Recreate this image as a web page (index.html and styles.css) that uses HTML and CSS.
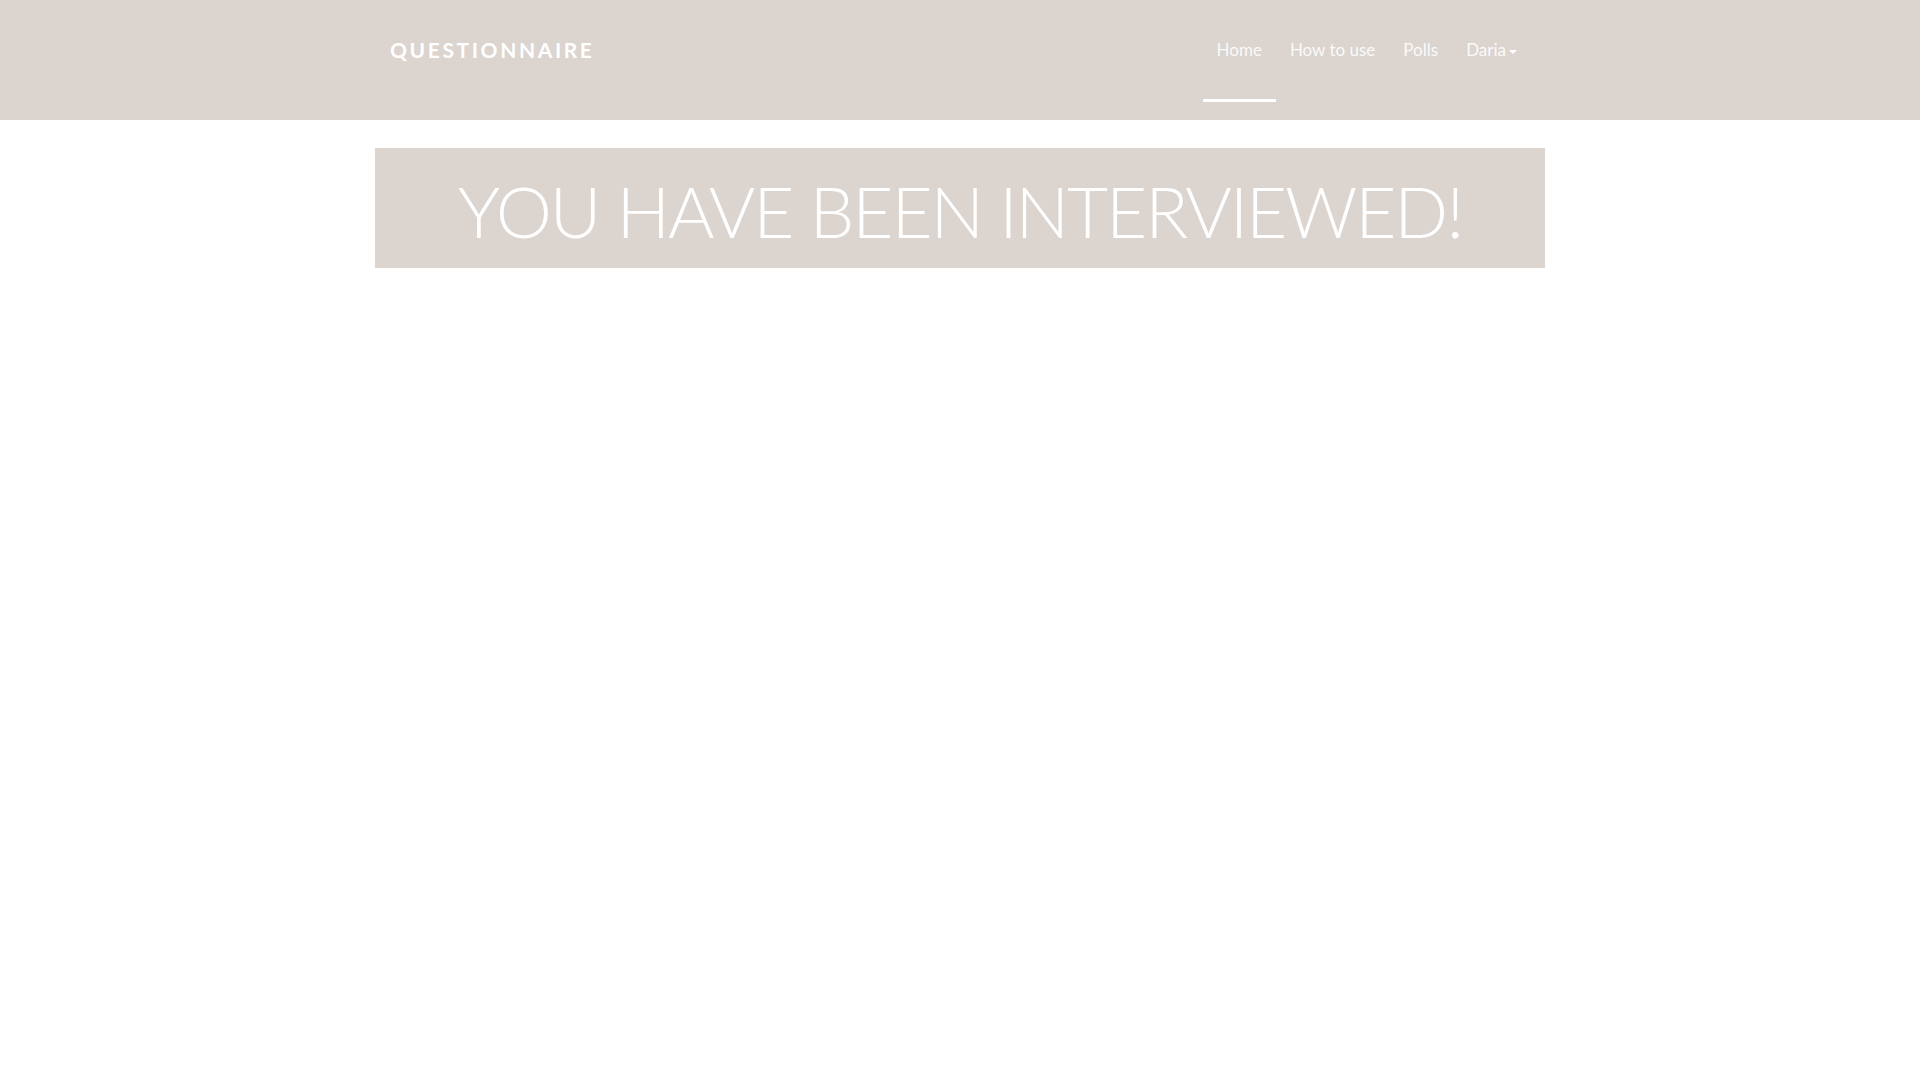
FILE: index.html
```html
<!DOCTYPE html>
<html lang="en">
<head>
<meta charset="utf-8">
<title>Questionnaire</title>
<link rel="stylesheet" href="styles.css">
</head>
<body>
<header class="navbar">
  <div class="container nav-inner">
    <a class="brand" href="#">QUESTIONNAIRE</a>
    <ul class="nav">
      <li><a class="nav-link active" href="#">Home</a></li>
      <li><a class="nav-link" href="#">How to use</a></li>
      <li><a class="nav-link" href="#">Polls</a></li>
      <li><a class="nav-link" href="#">Daria<span class="caret"></span></a></li>
    </ul>
  </div>
</header>
<main class="container">
  <div class="banner">
    <h1 class="banner-title">YOU HAVE BEEN INTERVIEWED!</h1>
  </div>
</main>
</body>
</html>
```

FILE: styles.css
```css
* { box-sizing: border-box; }
html, body { margin: 0; padding: 0; }
body {
  background: #ffffff;
  font-family: Lato, "Liberation Sans", sans-serif;
  color: #ffffff;
}
.container {
  width: 1170px;
  margin: 0 auto;
}
.navbar {
  background: #dbd4cf;
  height: 120px;
}
.nav-inner {
  display: flex;
  justify-content: space-between;
  align-items: flex-start;
  padding: 0 14px 0 15px;
}
.brand {
  display: block;
  margin-top: 37px;
  font-size: 21px;
  font-weight: 700;
  letter-spacing: 2.6px;
  color: #ffffff;
  text-decoration: none;
  line-height: normal;
}
.nav {
  list-style: none;
  margin: 0;
  padding: 0;
  display: flex;
}
.nav-link {
  display: block;
  padding: 39px 14px 38px;
  line-height: 22px;
  font-size: 17px;
  color: #fafafa;
  text-decoration: none;
  border-bottom: 3px solid transparent;
}
.nav-link.active {
  border-bottom-color: #ffffff;
}
.caret {
  display: inline-block;
  width: 0;
  height: 0;
  margin-left: 3px;
  vertical-align: middle;
  border-top: 4px solid #ffffff;
  border-left: 4px solid transparent;
  border-right: 4px solid transparent;
}
.banner {
  margin-top: 28px;
  height: 120px;
  background: #dbd4cf;
  padding-top: 6px;
}
.banner-title {
  margin: 0;
  text-align: center;
  font-size: 71px;
  font-weight: 300;
  letter-spacing: -2.1px;
  line-height: 114px;
  color: #ffffff;
}
```
